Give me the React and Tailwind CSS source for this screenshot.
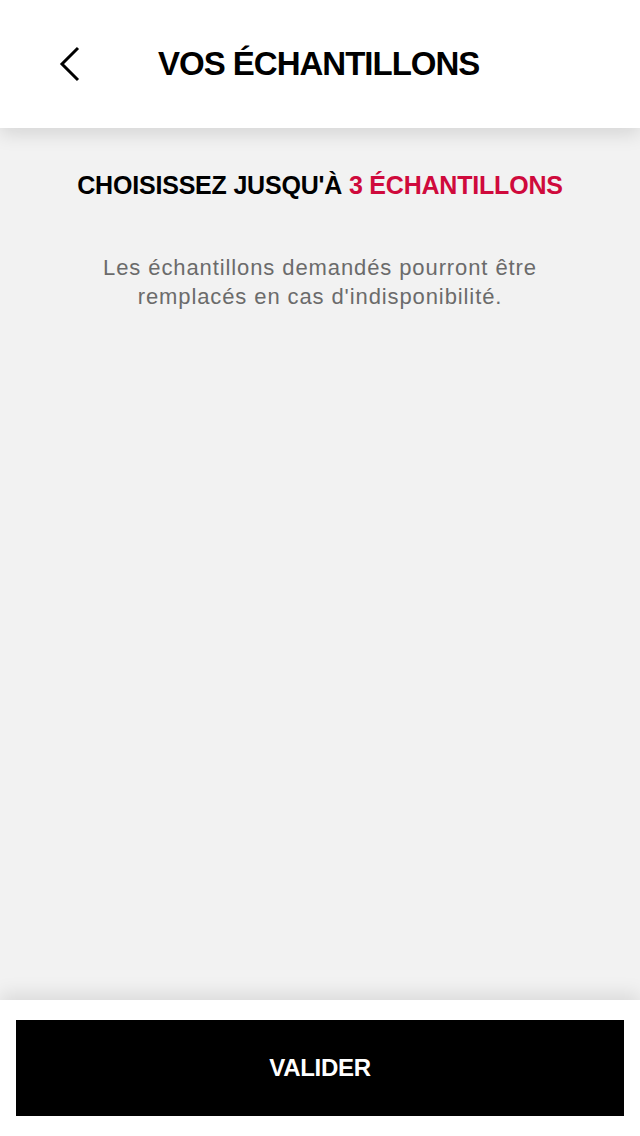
import React from "react";

export default function App() {
  return (
    <div className="h-[1136px] w-[640px] flex flex-col bg-[#f2f2f2] font-['Liberation_Sans',sans-serif] overflow-hidden">
      {/* Header */}
      <header className="relative z-10 h-[128px] bg-white flex items-center shadow-[0_6px_18px_rgba(0,0,0,0.12)]">
        <button className="w-[140px] h-full flex items-center pl-[56px]">
          <svg width="26" height="36" viewBox="0 0 26 36" fill="none">
            <path d="M22 2 L6 18 L22 34" stroke="#000" strokeWidth="3" />
          </svg>
        </button>
        <h1 className="text-[33px] font-bold text-black tracking-[-1px] ml-[18px]">
          VOS ÉCHANTILLONS
        </h1>
      </header>

      {/* Content */}
      <main className="flex-1 flex flex-col items-center pt-[39px]">
        <h2 className="text-[25px] font-bold text-black tracking-[-0.2px]">
          CHOISISSEZ JUSQU'À <span className="text-[#cf0a3c]">3 ÉCHANTILLONS</span>
        </h2>
        <p className="mt-[48px] text-center text-[22px] leading-[29px] tracking-[0.9px] text-[#6b6b6b]">
          Les échantillons demandés pourront être
          <br />
          remplacés en cas d'indisponibilité.
        </p>
      </main>

      {/* Footer */}
      <footer className="relative z-10 h-[136px] bg-white px-4 pt-[20px] shadow-[0_-6px_18px_rgba(0,0,0,0.10)]">
        <button className="w-full h-[96px] bg-black text-white text-[24px] font-bold tracking-[-0.3px]">
          VALIDER
        </button>
      </footer>
    </div>
  );
}
